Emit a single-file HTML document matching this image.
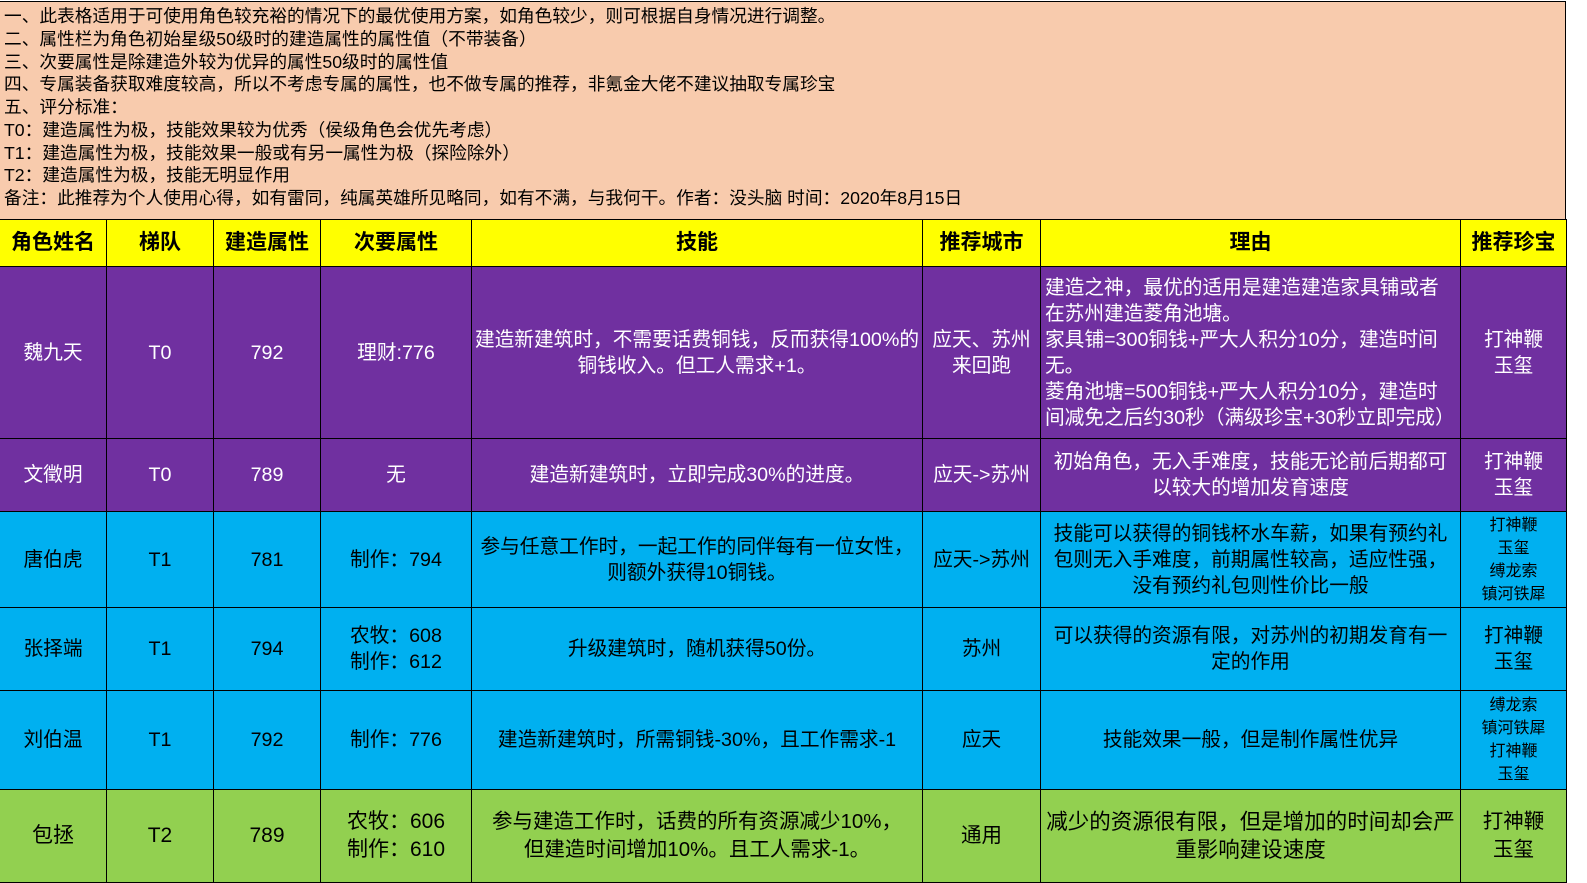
<!DOCTYPE html>
<html><head><meta charset="utf-8"><style>
*{margin:0;padding:0;box-sizing:border-box}
body{width:1587px;height:883px;background:#fff;position:relative;overflow:hidden;font-family:"Liberation Sans","Noto Sans CJK SC","WenQuanYi Zen Hei",sans-serif}
#notes{position:absolute;left:0;top:1px;width:1566px;height:219px;background:#f8cbad;border-top:1px solid #000;border-right:1px solid #000;padding:3px 0 0 4px;font-size:17.7px;line-height:22.75px;color:#000;white-space:nowrap}
.c{position:absolute;display:flex;align-items:center;justify-content:center;text-align:center;border-right:1.5px solid #000;border-bottom:1.5px solid #000;font-size:19.7px;line-height:26px;padding:0 2px;white-space:nowrap;overflow:hidden}
.h{background:#ffff00;font-weight:bold;font-size:21px;color:#000}
.p{background:#7030a0;color:#fff}
.b{background:#00b0f0;color:#000}
.g{background:#92d050;color:#000}
.s{font-size:16px;line-height:23px}
.l{justify-content:flex-start;text-align:left;padding-left:4px}
</style></head><body>
<div id="notes">
一、此表格适用于可使用角色较充裕的情况下的最优使用方案，如角色较少，则可根据自身情况进行调整。<br>
二、属性栏为角色初始星级50级时的建造属性的属性值（不带装备）<br>
三、次要属性是除建造外较为优异的属性50级时的属性值<br>
四、专属装备获取难度较高，所以不考虑专属的属性，也不做专属的推荐，非氪金大佬不建议抽取专属珍宝<br>
五、评分标准：<br>
T0：建造属性为极，技能效果较为优秀（侯级角色会优先考虑）<br>
T1：建造属性为极，技能效果一般或有另一属性为极（探险除外）<br>
T2：建造属性为极，技能无明显作用<br>
备注：此推荐为个人使用心得，如有雷同，纯属英雄所见略同，如有不满，与我何干。作者：没头脑 时间：2020年8月15日
</div>
<div style="position:absolute;left:0;top:219px;width:1567px;height:1.5px;background:#000"></div>
<!-- header -->
<div class="c h" style="left:0;top:220px;width:107px;height:47px">角色姓名</div>
<div class="c h" style="left:107px;top:220px;width:107px;height:47px">梯队</div>
<div class="c h" style="left:214px;top:220px;width:107px;height:47px">建造属性</div>
<div class="c h" style="left:321px;top:220px;width:151px;height:47px">次要属性</div>
<div class="c h" style="left:472px;top:220px;width:451px;height:47px">技能</div>
<div class="c h" style="left:923px;top:220px;width:118px;height:47px">推荐城市</div>
<div class="c h" style="left:1041px;top:220px;width:420px;height:47px">理由</div>
<div class="c h" style="left:1461px;top:220px;width:106px;height:47px">推荐珍宝</div>
<!-- row1 -->
<div class="c p" style="left:0;top:267px;width:107px;height:172px">魏九天</div>
<div class="c p" style="left:107px;top:267px;width:107px;height:172px">T0</div>
<div class="c p" style="left:214px;top:267px;width:107px;height:172px">792</div>
<div class="c p" style="left:321px;top:267px;width:151px;height:172px">理财:776</div>
<div class="c p" style="left:472px;top:267px;width:451px;height:172px">建造新建筑时，不需要话费铜钱，反而获得100%的<br>铜钱收入。但工人需求+1。</div>
<div class="c p" style="left:923px;top:267px;width:118px;height:172px">应天、苏州<br>来回跑</div>
<div class="c p l" style="left:1041px;top:267px;width:420px;height:172px">建造之神，最优的适用是建造建造家具铺或者<br>在苏州建造菱角池塘。<br>家具铺=300铜钱+严大人积分10分，建造时间<br>无。<br>菱角池塘=500铜钱+严大人积分10分，建造时<br>间减免之后约30秒（满级珍宝+30秒立即完成）</div>
<div class="c p" style="left:1461px;top:267px;width:106px;height:172px">打神鞭<br>玉玺</div>
<!-- row2 -->
<div class="c p" style="left:0;top:439px;width:107px;height:73px">文徵明</div>
<div class="c p" style="left:107px;top:439px;width:107px;height:73px">T0</div>
<div class="c p" style="left:214px;top:439px;width:107px;height:73px">789</div>
<div class="c p" style="left:321px;top:439px;width:151px;height:73px">无</div>
<div class="c p" style="left:472px;top:439px;width:451px;height:73px">建造新建筑时，立即完成30%的进度。</div>
<div class="c p" style="left:923px;top:439px;width:118px;height:73px;padding:0">应天-&gt;苏州</div>
<div class="c p" style="left:1041px;top:439px;width:420px;height:73px">初始角色，无入手难度，技能无论前后期都可<br>以较大的增加发育速度</div>
<div class="c p" style="left:1461px;top:439px;width:106px;height:73px">打神鞭<br>玉玺</div>
<!-- row3 -->
<div class="c b" style="left:0;top:512px;width:107px;height:96px">唐伯虎</div>
<div class="c b" style="left:107px;top:512px;width:107px;height:96px">T1</div>
<div class="c b" style="left:214px;top:512px;width:107px;height:96px">781</div>
<div class="c b" style="left:321px;top:512px;width:151px;height:96px">制作：794</div>
<div class="c b" style="left:472px;top:512px;width:451px;height:96px">参与任意工作时，一起工作的同伴每有一位女性，<br>则额外获得10铜钱。</div>
<div class="c b" style="left:923px;top:512px;width:118px;height:96px;padding:0">应天-&gt;苏州</div>
<div class="c b" style="left:1041px;top:512px;width:420px;height:96px">技能可以获得的铜钱杯水车薪，如果有预约礼<br>包则无入手难度，前期属性较高，适应性强，<br>没有预约礼包则性价比一般</div>
<div class="c b s" style="left:1461px;top:512px;width:106px;height:96px">打神鞭<br>玉玺<br>缚龙索<br>镇河铁犀</div>
<!-- row4 -->
<div class="c b" style="left:0;top:608px;width:107px;height:83px">张择端</div>
<div class="c b" style="left:107px;top:608px;width:107px;height:83px">T1</div>
<div class="c b" style="left:214px;top:608px;width:107px;height:83px">794</div>
<div class="c b" style="left:321px;top:608px;width:151px;height:83px">农牧：608<br>制作：612</div>
<div class="c b" style="left:472px;top:608px;width:451px;height:83px">升级建筑时，随机获得50份。</div>
<div class="c b" style="left:923px;top:608px;width:118px;height:83px">苏州</div>
<div class="c b" style="left:1041px;top:608px;width:420px;height:83px">可以获得的资源有限，对苏州的初期发育有一<br>定的作用</div>
<div class="c b" style="left:1461px;top:608px;width:106px;height:83px">打神鞭<br>玉玺</div>
<!-- row5 -->
<div class="c b" style="left:0;top:691px;width:107px;height:99px">刘伯温</div>
<div class="c b" style="left:107px;top:691px;width:107px;height:99px">T1</div>
<div class="c b" style="left:214px;top:691px;width:107px;height:99px">792</div>
<div class="c b" style="left:321px;top:691px;width:151px;height:99px">制作：776</div>
<div class="c b" style="left:472px;top:691px;width:451px;height:99px">建造新建筑时，所需铜钱-30%，且工作需求-1</div>
<div class="c b" style="left:923px;top:691px;width:118px;height:99px">应天</div>
<div class="c b" style="left:1041px;top:691px;width:420px;height:99px">技能效果一般，但是制作属性优异</div>
<div class="c b s" style="left:1461px;top:691px;width:106px;height:99px">缚龙索<br>镇河铁犀<br>打神鞭<br>玉玺</div>
<!-- row6 -->
<div class="c g" style="left:0;top:790px;width:107px;height:93px;font-size:21px">包拯</div>
<div class="c g" style="left:107px;top:790px;width:107px;height:93px;font-size:21px">T2</div>
<div class="c g" style="left:214px;top:790px;width:107px;height:93px;font-size:21px">789</div>
<div class="c g" style="left:321px;top:790px;width:151px;height:93px;font-size:21px;line-height:28px">农牧：606<br>制作：610</div>
<div class="c g" style="left:472px;top:790px;width:451px;height:93px;font-size:20.5px;line-height:28px">参与建造工作时，话费的所有资源减少10%，<br>但建造时间增加10%。且工人需求-1。</div>
<div class="c g" style="left:923px;top:790px;width:118px;height:93px;font-size:20.5px">通用</div>
<div class="c g" style="left:1041px;top:790px;width:420px;height:93px;font-size:21.5px;line-height:28px;padding:0">减少的资源很有限，但是增加的时间却会严<br>重影响建设速度</div>
<div class="c g" style="left:1461px;top:790px;width:106px;height:93px;font-size:20.5px;line-height:28px">打神鞭<br>玉玺</div>
</body></html>
